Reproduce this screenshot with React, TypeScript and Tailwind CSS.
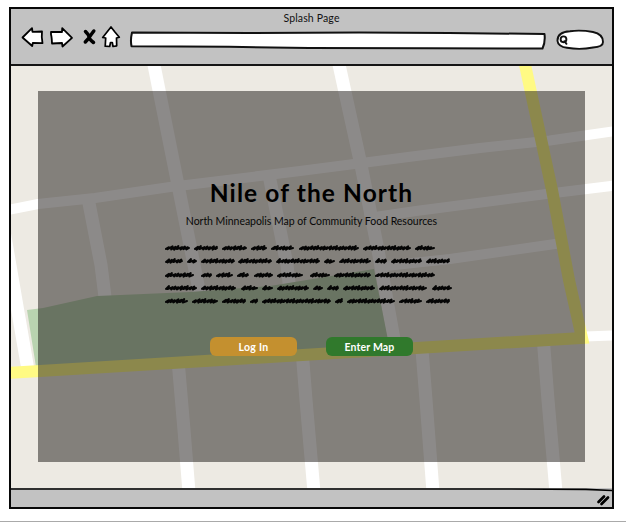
import React from "react";

const fontStack = "font-['Lato','Noto_Sans',sans-serif]";

const copyLines: [number, number][][] = [
  [[166, 191], [195, 219], [223, 248], [252, 268], [272, 295], [300, 360], [364, 412], [416, 436]],
  [[166, 184], [188, 198], [202, 236], [239, 273], [277, 321], [325, 336], [340, 372], [376, 388], [392, 423], [427, 451]],
  [[166, 195], [202, 213], [217, 234], [238, 250], [255, 274], [278, 304], [311, 331], [335, 372], [376, 436]],
  [[166, 198], [202, 237], [242, 259], [263, 274], [278, 310], [314, 324], [328, 340], [344, 376], [380, 428], [433, 453]],
  [[166, 189], [193, 219], [223, 247], [251, 259], [263, 332], [336, 344], [348, 396], [400, 423], [427, 451]],
];

function scribble(start: number, end: number, seed: number) {
  const rise = [0.8, 1.6, 1.1, 1.9, 0.9, 1.5];
  const drop = [1.2, 1.5, 1.7, 1.1, 1.5];
  let d = `M${start - 165} 4.9`;
  let x = start - 165;
  const last = end - 167;
  let i = seed;
  while (x < last - 3) {
    d += `L${(x + 3).toFixed(1)} ${(4 - rise[i % 6]).toFixed(1)}L${(x + 1.6).toFixed(1)} ${(4 + drop[i % 5]).toFixed(1)}`;
    x += i % 3 === 0 ? 3.6 : 2.9;
    i += 1;
  }
  return d + `L${last} 4`;
}

function ScribbleLine({ words, row }: { words: [number, number][]; row: number }) {
  return (
    <svg className="h-2 w-[292px]" viewBox="0 0 292 8" fill="none" stroke="#050505" strokeWidth="2" strokeLinecap="round" strokeLinejoin="round">
      {words.map(([a, b], i) => (
        <path key={a} d={scribble(a, b, i * 2 + row)} />
      ))}
    </svg>
  );
}

function StreetMap() {
  return (
    <svg className="absolute inset-0 h-full w-full" viewBox="11 66 601 422" preserveAspectRatio="none" fill="none">
      <g stroke="#fff" strokeWidth="13">
        <path d="M153 60L177 180L201 300M178 360L184 430L189 492" />
        <path d="M338 60L361 165L378 250L395 345M422 350L426 400L433 492" />
        <path d="M302 350L306 400L314 492" />
        <path d="M543 336L548 400L556 492" />
        <path d="M88 198L101 265L106 305" />
        <path d="M269 175L287 265L291 300" />
        <path d="M3 225L28 370" />
      </g>
      <g stroke="#fff" strokeWidth="10">
        <path d="M8 210L38 204L95 198L170 187L300 171L416 156L480 148L550 140.500L615 131" />
        <path d="M365 218.500L416 211L550 193.500L615 185.500" />
        <path d="M376 267L450 259L562 243" />
        <path d="M585 336.500L614 335.500" />
      </g>
      <path d="M27 310L43 308L97 296L190 292L270 286L374 269L389 345L36 367Z" fill="#b9d3b0" />
      <path d="M382 280L394 340" stroke="#fff" strokeWidth="10" />
      <path d="M524 60L552 190L569 280L582 338L400 349L205 361L8 373" stroke="#fffa84" strokeWidth="12" />
    </svg>
  );
}

function BackIcon() {
  return (
    <svg className="h-6 w-6" viewBox="0 0 24 24" fill="#fff" stroke="#000" strokeWidth="1.800" strokeLinejoin="round">
      <path d="M1.500 12.500L11 3.200L11.500 6.800L21 6.500Q20.300 12 21.500 18.200L11.800 18L11.200 21Z" />
    </svg>
  );
}

function ForwardIcon() {
  return (
    <svg className="h-6 w-6" viewBox="0 0 24 24" fill="#fff" stroke="#000" strokeWidth="1.800" strokeLinejoin="round">
      <path d="M1 7L12 7L12.200 3.200L22 12.800L12.500 21.500L12 18L2 18.500Q1.800 12 1 9.500Z" />
    </svg>
  );
}

function StopIcon() {
  return (
    <svg className="h-6 w-4" viewBox="0 0 16 24" fill="none" stroke="#000" strokeWidth="3.500" strokeLinecap="round">
      <path d="M4.500 6.500Q8 10 8 12T12.500 17.500M12.800 6Q9 11 8 13L4.300 17" />
    </svg>
  );
}

function HomeIcon() {
  return (
    <svg className="h-6 w-5" viewBox="0 0 20 24" fill="#fff" stroke="#000" strokeWidth="1.700" strokeLinejoin="round">
      <path d="M10 2L1.700 12.500L4.700 13L4.200 21.200L8.700 21.500L9.500 17.500L11.300 17.500L12 21.500L15.700 20.800L15.500 13L18.300 12.200L13.500 6.500Z" />
    </svg>
  );
}

function AddressBar() {
  return (
    <svg className="h-[22px] w-[418px]" viewBox="0 0 418 22" fill="#fff" stroke="#111" strokeWidth="2" strokeLinejoin="round">
      <path d="M3 3.500L120 4L230 3.500L320 4L415.500 5Q416.500 13 413.500 19.500L300 19.200L180 19L100 17.800L2.500 17.300Q1.200 11 3 3.500Z" />
    </svg>
  );
}

function SearchBox() {
  return (
    <svg className="h-[22px] w-[50px]" viewBox="0 0 50 22" fill="#fff" stroke="#111" strokeWidth="1.900" strokeLinejoin="round" strokeLinecap="round">
      <path d="M2.500 12Q2 3 15 2.200Q26 .8 38 3Q48 5 48 13Q48 18 38 18.500Q25 21 12 18.800Q3 17.500 2.500 12Z" />
      <circle cx="8.500" cy="10.300" r="2.900" />
      <path d="M9.300 12.200L11.500 14.800" />
    </svg>
  );
}

export default function App() {
  return (
    <div className={`h-[522px] w-[626px] overflow-hidden border-b border-[#aaa] bg-white pl-[9px] pt-[7px] ${fontStack}`}>
      <main className="flex h-[502px] w-[605px] flex-col border-2 border-[#080808] bg-[#c2c2c2]">
        <header className="flex h-[57px] shrink-0 flex-col border-b-2 border-[#151515]">
          <h1 className="h-4 text-center text-[10.5px] leading-[18px] tracking-[0.15px] text-[#111]">Splash Page</h1>
          <nav className="flex h-6 items-center pl-[10px]">
            <BackIcon />
            <span className="ml-[5px] flex"><ForwardIcon /></span>
            <span className="ml-[7px] flex"><StopIcon /></span>
            <span className="ml-[4px] flex"><HomeIcon /></span>
            <span className="ml-[8px] mt-[6px] flex"><AddressBar /></span>
            <span className="ml-[8px] mt-[6px] flex"><SearchBox /></span>
          </nav>
        </header>

        <section className="relative h-[422px] shrink-0 overflow-hidden bg-[#edeae3] pl-[27px] pt-[25px]">
          <StreetMap />
          <div className="relative flex h-[371px] w-[547px] flex-col items-center bg-[rgb(26_22_20/0.5)]">
            <h2 className="mt-[84px] whitespace-nowrap text-[24.5px] font-bold leading-9 tracking-[1.1px] text-black">Nile of the North</h2>
            <p className="mt-[2px] whitespace-nowrap text-[10.5px] leading-4 tracking-[-0.03px] text-[#080808]">North Minneapolis Map of Community Food Resources</p>
            <div className="mr-px mt-[15px] flex flex-col gap-[5.3px]">
              {copyLines.map((words, i) => (
                <ScribbleLine key={i} words={words} row={i} />
              ))}
            </div>
            <div className="mt-[32px] flex gap-[29px]">
              <button className="h-[19px] w-[87px] rounded-[6px] bg-[#c4902f] text-[10.5px] font-bold leading-[18px] tracking-[0.3px] text-white">Log In</button>
              <button className="h-[19px] w-[87px] rounded-[6px] bg-[#30792c] text-[10.5px] font-bold leading-[18px] tracking-[0.15px] text-white">Enter Map</button>
            </div>
          </div>
        </section>

        <footer className="flex grow items-center justify-end bg-[#c2c2c2]">
          <svg className="h-full w-full" viewBox="0 0 601 19" preserveAspectRatio="none" fill="none" stroke="#000" strokeLinecap="round">
            <path d="M0 1H500L575 1.400L601 2.500" strokeWidth="1.600" />
            <path d="M587.500 14L593 8.500M590.500 16L597 9.500" strokeWidth="2.700" />
          </svg>
        </footer>
      </main>
    </div>
  );
}
